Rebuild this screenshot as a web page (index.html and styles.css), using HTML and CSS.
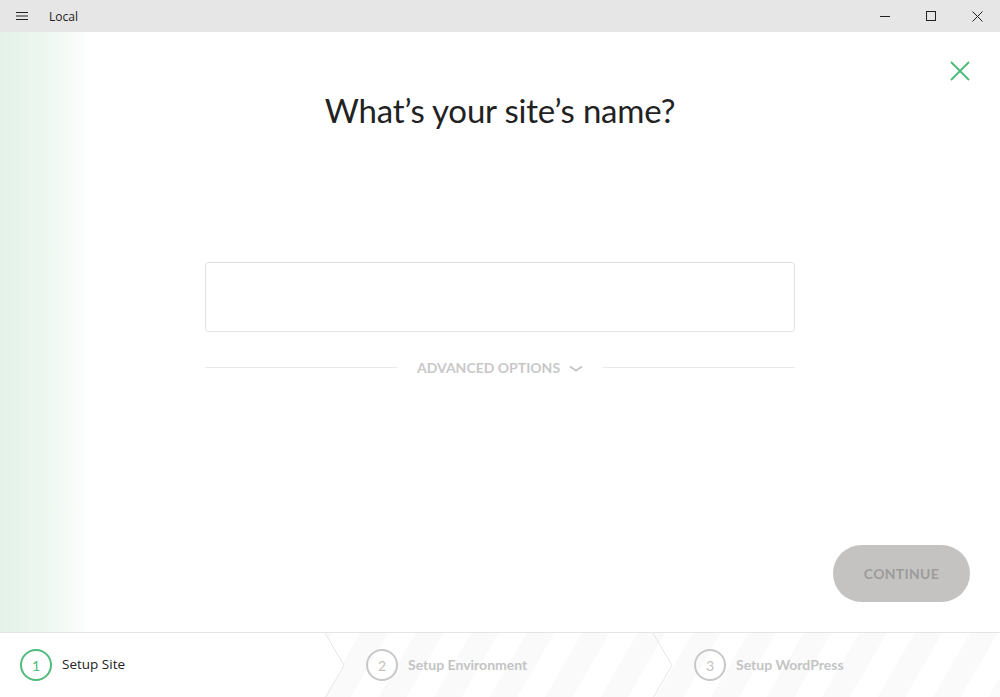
FILE: index.html
```html
<!DOCTYPE html>
<html>
<head>
<meta charset="utf-8">
<link rel="stylesheet" href="styles.css">
</head>
<body>
<div class="app">
  <header class="titlebar">
    <div class="tb-left">
      <svg class="menu" width="12" height="10" viewBox="0 0 12 10"><path d="M0 1.5h12M0 5h12M0 8.5h12" stroke="#222" stroke-width="1"/></svg>
      <span class="app-name">Local</span>
    </div>
    <div class="tb-controls">
      <span class="ctl"><svg width="10" height="10" viewBox="0 0 10 10"><path d="M0 5.5h10" stroke="#222" stroke-width="1"/></svg></span>
      <span class="ctl"><svg width="10" height="10" viewBox="0 0 10 10"><rect x="0.5" y="0.5" width="9" height="9" fill="none" stroke="#222" stroke-width="1"/></svg></span>
      <span class="ctl"><svg width="11" height="11" viewBox="0 0 11 11"><path d="M0.5 0.5l10 10M10.5 0.5l-10 10" stroke="#222" stroke-width="1"/></svg></span>
    </div>
  </header>
  <main class="content">
    <button class="close-btn" aria-label="Close"><svg width="20" height="20" viewBox="0 0 20 20"><path d="M1 1l18 18M19 1L1 19" stroke="#51bb7b" stroke-width="2"/></svg></button>
    <h1 class="title">What’s your site’s name?</h1>
    <div class="form">
      <input class="name-input" type="text">
      <div class="advanced">
        <span class="rule"></span>
        <span class="adv-label">ADVANCED OPTIONS <svg class="chev" width="14" height="8" viewBox="0 0 14 8"><path d="M1 1.5l6 4 6-4" fill="none" stroke="#c8c8c8" stroke-width="2"/></svg></span>
        <span class="rule"></span>
      </div>
    </div>
    <div class="actions">
      <button class="continue">CONTINUE</button>
    </div>
  </main>
  <footer class="steps">
    <div class="step active">
      <span class="num">1</span><span class="label">Setup Site</span>
      <svg class="arrow" width="22" height="65" viewBox="0 0 22 65"><path d="M1 0L20 32.5L1 65" fill="#fff" stroke="#e6e6e6" stroke-width="1"/></svg>
    </div>
    <div class="step">
      <span class="num">2</span><span class="label">Setup Environment</span>
      <svg class="arrow" width="22" height="65" viewBox="0 0 22 65"><path d="M1 0L20 32.5L1 65" fill="none" stroke="#e6e6e6" stroke-width="1"/></svg>
    </div>
    <div class="step">
      <span class="num">3</span><span class="label">Setup WordPress</span>
    </div>
  </footer>
</div>
</body>
</html>
```
FILE: styles.css
```css
* { box-sizing: border-box; }
html, body { margin: 0; padding: 0; }
body {
  width: 1000px;
  height: 697px;
  overflow: hidden;
  font-family: Lato, "Open Sans", sans-serif;
  background: #fff;
}
.app { display: flex; flex-direction: column; height: 697px; }
.titlebar {
  height: 32px;
  background: #e6e6e6;
  display: flex;
  align-items: center;
  justify-content: space-between;
}
.tb-left { display: flex; align-items: center; }
.menu { margin-left: 16px; }
.app-name {
  margin-left: 21px;
  font-family: "Open Sans", "Noto Sans", sans-serif;
  font-size: 12px;
  color: #222;
}
.tb-controls { display: flex; height: 32px; }
.ctl {
  width: 46px;
  height: 32px;
  display: flex;
  align-items: center;
  justify-content: center;
}
.content {
  flex: 1;
  position: relative;
  background: linear-gradient(to right, #e3f2e8 0px, #edf7f0 45px, #fff 92px);
  display: flex;
  flex-direction: column;
  align-items: center;
}
.close-btn {
  position: absolute;
  top: 29px;
  right: 30px;
  border: 0;
  background: none;
  padding: 0;
  width: 20px;
  height: 20px;
}
.close-btn svg { display: block; }
.title {
  margin: 58px 0 0;
  font-family: Lato, sans-serif;
  font-weight: 400;
  font-size: 33px;
  line-height: 40px;
  color: #222;
  letter-spacing: -0.2px;
}
.form { width: 590px; margin-top: 132px; }
.name-input {
  display: block;
  width: 590px;
  height: 70px;
  border: 1px solid #e2e2e2;
  border-radius: 3px;
  background: #fff;
  outline: none;
}
.advanced {
  display: flex;
  align-items: center;
  margin-top: 27px;
  gap: 20px;
}
.rule { flex: 1; height: 1px; background: #e8e8e8; }
.adv-label {
  font-family: Lato, sans-serif;
  font-weight: 700;
  font-size: 14px;
  color: #c8c8c8;
  display: flex;
  align-items: center;
  gap: 9px;
}
.chev { margin-top: 2px; }
.actions {
  margin-top: auto;
  align-self: flex-end;
  margin-right: 30px;
  margin-bottom: 30px;
}
.continue {
  width: 137px;
  height: 57px;
  border: 0;
  border-radius: 29px;
  background: #c5c3c2;
  color: #9d9b9a;
  font-family: Lato, sans-serif;
  font-weight: 700;
  font-size: 14px;
  letter-spacing: 0.3px;
}
.steps {
  height: 65px;
  border-top: 1px solid #e5e5e5;
  display: flex;
  background: repeating-linear-gradient(120deg, #fff 0px, #fff 24px, #fafafa 24px, #fafafa 48px);
}
.step {
  position: relative;
  display: flex;
  align-items: center;
  padding-left: 41px;
  width: 328px;
}
.step:first-child { padding-left: 20px; width: 325px; }
.step:last-child { flex: 1; }
.step.active { background: #fff; }
.arrow { position: absolute; top: 0; right: -21px; z-index: 1; }
.num {
  width: 32px;
  height: 32px;
  border-radius: 50%;
  border: 2px solid #c8c8c8;
  color: #c0c0c0;
  font-size: 14px;
  display: flex;
  align-items: center;
  justify-content: center;
  font-family: Lato, sans-serif;
}
.label {
  margin-left: 10px;
  font-family: Lato, sans-serif;
  font-weight: 700;
  font-size: 14px;
  color: #c4c4c4;
  margin-top: -2px;
}
.step.active .num { border-color: #51bb7b; color: #51bb7b; }
.step.active .label {
  font-family: "Open Sans", "Noto Sans", sans-serif;
  font-weight: 400;
  font-size: 13.5px;
  color: #222;
}
```
